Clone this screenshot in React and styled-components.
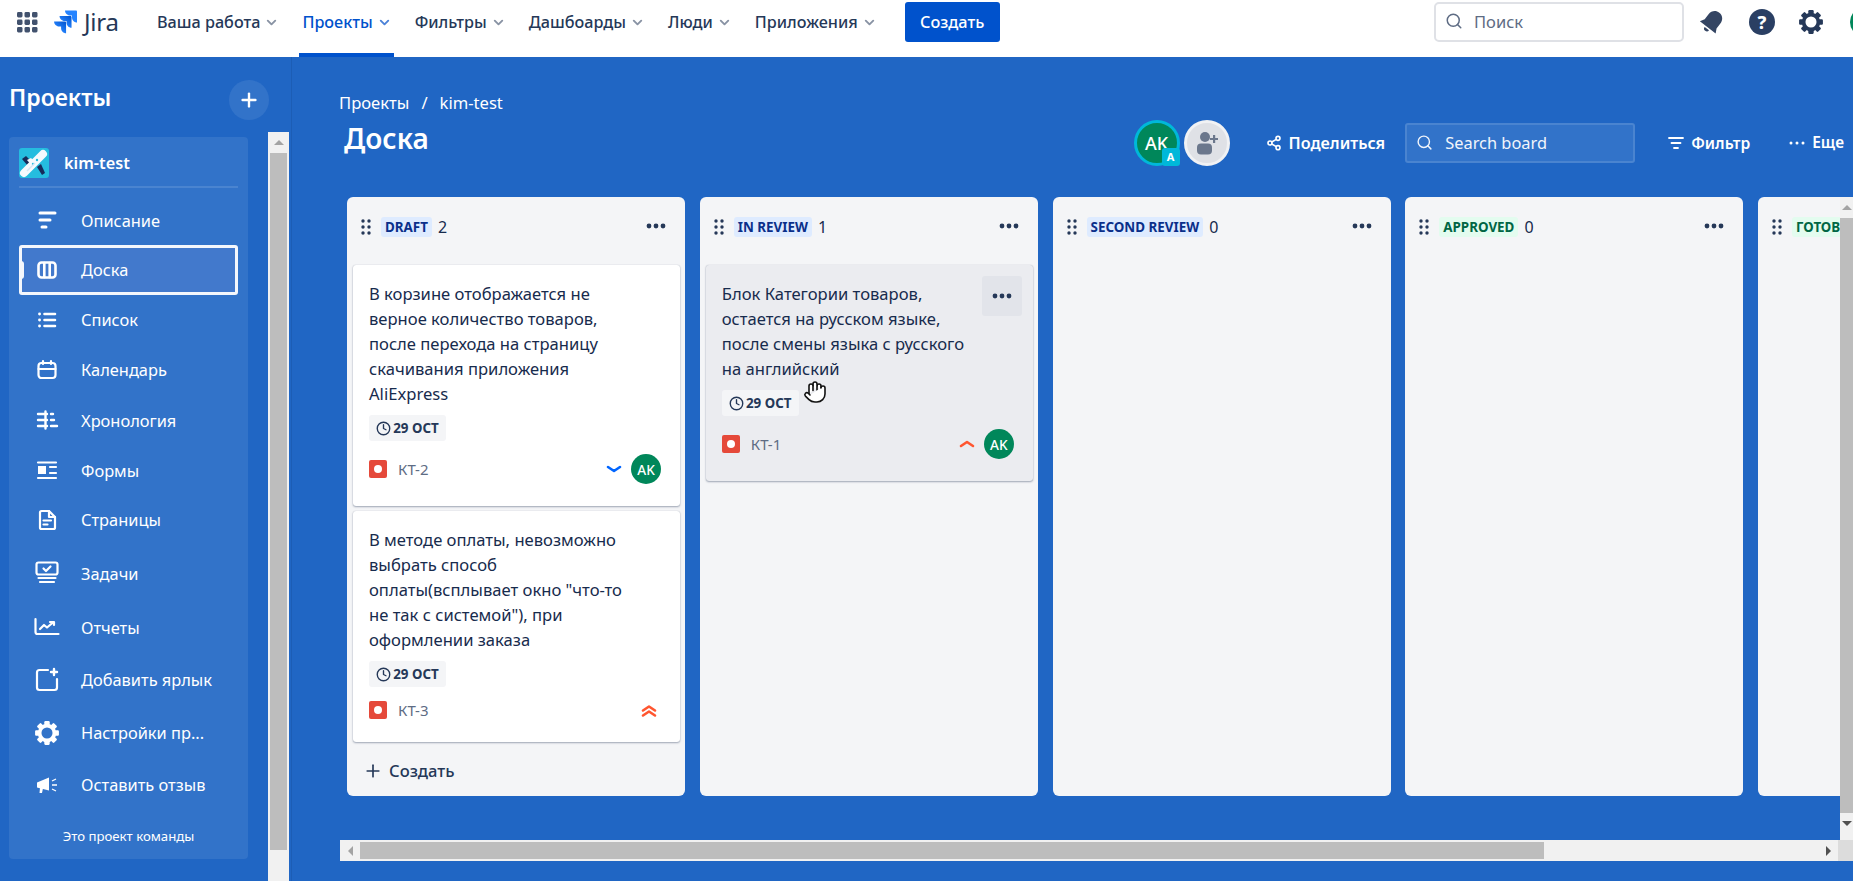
import React from "react";
import styled, { createGlobalStyle } from "styled-components";
import { Search, Share2, Clock, Plus, Hand, ChevronDown } from "lucide-react";

const Global = createGlobalStyle`
  html, body { margin: 0; padding: 0; height: 100%; overflow: hidden; }
  body { font-family: "Noto Sans", "Open Sans", sans-serif; color: #172b4d; background: #2066c4; }
  * { box-sizing: border-box; }
`;

const Page = styled.div`width: 1853px; height: 881px; display: flex; flex-direction: column; overflow: hidden;`;

/* top bar */
const TopBar = styled.header`height: 57px; flex: none; background: #fff; display: flex; align-items: flex-start; padding-left: 17px; overflow: hidden;`;
const GridWrap = styled.div`width: 21px; height: 21px; margin-top: 12px; flex: none;`;
const LogoWrap = styled.div`display: flex; align-items: center; gap: 7px; margin: 10px 0 0 16px; height: 24px; flex: none;`;
const LogoText = styled.span`font-size: 24px; font-weight: 400; color: #253858; line-height: 24px; width: 35px; letter-spacing: -0.2px;`;
const Nav = styled.nav`display: flex; gap: 18px; margin-left: 35px; flex: none;`;
const NavItem = styled.div`
  height: 57px; padding: 0 2px 9px 3px; display: flex; align-items: center; gap: 4px; font-size: 16.2px; font-weight: 500;
  color: ${p => (p.$active ? "#0052cc" : "#253858")};
  border-bottom: 4px solid ${p => (p.$active ? "#0052cc" : "transparent")};
  svg { color: ${p => (p.$active ? "#4c82d8" : "#8993a4")}; }
`;
const CreateBtn = styled.button`width: 95px; height: 40px; margin: 2px 0 0 26px; background: #0052cc; color: #fff; border: 0; border-radius: 3px; font: 500 16.3px "Noto Sans", sans-serif; flex: none;`;
const Spacer = styled.div`flex: 1;`;
const TopSearch = styled.div`width: 250px; height: 40px; margin-top: 2px; border: 2px solid #dfe1e6; border-radius: 5px; display: flex; align-items: center; padding: 0 0 2px 9px; gap: 11px; color: #5e6c84; font-size: 16.5px; flex: none;`;
const TopIcon = styled.div`width: 30px; height: 30px; margin: 7px 0 0 ${p => p.$gap}px; flex: none; display: flex; align-items: center; justify-content: center;`;
const UserDot = styled.div`width: 30px; height: 30px; margin: 7px -27px 0 24px; border-radius: 50%; background: #00875a; flex: none;`;

/* body */
const Body = styled.div`flex: 1; display: flex; min-height: 0;`;
const Sidebar = styled.aside`width: 292px; flex: none; padding-left: 9px; border-right: 1px solid #1c5db5; display: flex; flex-direction: column;`;
const SideHead = styled.div`height: 75px; display: flex; align-items: center; justify-content: space-between; padding: 10px 22px 0 0;`;
const SideTitle = styled.h2`margin: -6px 0 0; font-size: 23px; font-weight: 600; color: #fff; line-height: 30px;`;
const RoundAdd = styled.div`width: 40px; height: 40px; border-radius: 50%; background: #3273c9; color: #fff; display: flex; align-items: center; justify-content: center;`;
const SideRow = styled.div`flex: 1; display: flex; min-height: 0;`;
const ProjectCard = styled.div`width: 239px; height: 722px; margin-top: 5px; background: #3273c9; border-radius: 4px; padding: 0 10px; display: flex; flex-direction: column; flex: none;`;
const ProjectHead = styled.div`height: 51px; margin-bottom: 8px; border-bottom: 2px solid #4a84d0; display: flex; align-items: center; gap: 15px; padding-top: 3px; color: #fff; font-weight: 600; font-size: 16.3px;`;
const SideItem = styled.div`
  position: relative; height: ${p => p.$h}px; display: flex; align-items: center; color: #fff; font-size: 16.4px; border-radius: 3px; padding-bottom: 1px;
  ${p => p.$active && `
    background: #4279cc; box-shadow: inset 0 0 0 3px #f4f7fc;
    &::before { content: ""; position: absolute; left: 0; top: 16px; width: 5px; height: 18px; background: #f4f7fc; border-radius: 0 3px 3px 0; }
  `}
`;
const SideIcon = styled.span`width: 30px; margin: 0 19px 0 13px; display: flex; justify-content: center; flex: none;`;
const SideFoot = styled.div`margin-top: 15px; text-align: center; color: #fff; font-size: 13.2px; line-height: 20px;`;

const ScrollV = styled.div`width: ${p => p.$w}px; margin-left: ${p => p.$ml}px; background: #f1f1f1; display: flex; flex-direction: column; align-items: center; flex: none;`;
const ArrowBox = styled.div`height: 21px; width: 100%; display: flex; align-items: center; justify-content: center; flex: none;`;
const ThumbV = styled.div`width: ${p => p.$w}px; height: ${p => p.$h}px; background: #bdbdbd; flex: none;`;
const Tri = styled.span`
  width: 0; height: 0; border-style: solid;
  ${p => p.$dir === "up" && `border-width: 0 5px 5px 5px; border-color: transparent transparent ${p.$c} transparent;`}
  ${p => p.$dir === "down" && `border-width: 5px 5px 0 5px; border-color: ${p.$c} transparent transparent transparent;`}
  ${p => p.$dir === "left" && `border-width: 5px 5px 5px 0; border-color: transparent ${p.$c} transparent transparent;`}
  ${p => p.$dir === "right" && `border-width: 5px 0 5px 5px; border-color: transparent transparent transparent ${p.$c};`}
`;

/* main */
const Main = styled.main`flex: 1; min-width: 0; display: flex; flex-direction: column; padding-left: 47px;`;
const Crumbs = styled.div`height: 22px; margin-top: 35px; display: flex; gap: 12px; color: #fff; font-size: 16.6px; line-height: 22px;`;
const HeadRow = styled.div`height: 83px; padding: 4px 9px 30px 5px; display: flex; align-items: center;`;
const PageTitle = styled.h1`margin: -9px 0 0; font-size: 28px; font-weight: 600; color: #fff;`;
const Tools = styled.div`margin-left: auto; display: flex; align-items: center; color: #fff;`;
const AvatarBig = styled.div`position: relative; width: 46px; height: 46px; border-radius: 50%; background: #00875a; border: 3px solid #00b8d9; color: #fff; font-size: 18px; font-weight: 500; display: flex; align-items: center; justify-content: center;`;
const AvatarBadge = styled.span`position: absolute; right: -3px; bottom: -3px; width: 18px; height: 18px; border-radius: 3px; background: #00b8d9; color: #fff; font-size: 11px; font-weight: 700; display: flex; align-items: center; justify-content: center;`;
const AvatarAdd = styled.div`width: 46px; height: 46px; margin-left: 4px; border-radius: 50%; background: #dfe1e6; border: 3px solid #f1f2f4; display: flex; align-items: center; justify-content: center;`;
const ToolBtn = styled.div`display: flex; align-items: center; gap: ${p => p.$gap}px; margin-left: ${p => p.$ml}px; font-size: ${p => p.$fs}px; font-weight: 600;`;
const BoardSearch = styled.div`width: 230px; height: 40px; margin-left: 20px; background: #3273c9; border: 2px solid #4a84d0; border-radius: 3px; display: flex; align-items: center; padding-left: 9px; gap: 12px; color: #f1f5fb; font-size: 16.4px;`;

const Frame = styled.div`height: 664px; display: grid; grid-template-columns: minmax(0, 1fr) 15px; grid-template-rows: minmax(0, 1fr) 21px; margin-left: 1px;`;
const Viewport = styled.div`overflow: hidden; margin-right: -2px; min-width: 0;`;
const Columns = styled.div`display: flex; gap: 14.75px; padding-left: 7px; width: max-content;`;
const Column = styled.section`width: 338px; height: 599px; background: #f4f5f7; border-radius: 6px; display: flex; flex-direction: column; flex: none; padding: 0 5px 0 6px;`;
const ColHead = styled.div`height: 68px; flex: none; display: flex; align-items: flex-start; padding: 20px 14px 0 8px;`;
const Lozenge = styled.span`height: 20px; padding: 0 4px; margin-left: 10px; border-radius: 3px; font-size: 13.4px; font-weight: 700; line-height: 20px; background: ${p => (p.$green ? "#e3fcef" : "#deebff")}; color: ${p => (p.$green ? "#006644" : "#0a2f8a")}; white-space: nowrap;`;
const Count = styled.span`margin-left: 6px; font-size: 16px; line-height: 21px; color: #172b4d;`;
const HeadDots = styled.div`margin-left: auto; padding-top: 6px; display: flex;`;
const Cards = styled.div`display: flex; flex-direction: column; gap: 5px;`;
const Card = styled.article`position: relative; background: ${p => (p.$hover ? "#ebecf0" : "#fff")}; border-radius: 3px; padding: 16px 19px 22px 16px; box-shadow: 0 1px 2px rgba(9,30,66,.35), 0 0 1px rgba(9,30,66,.25);`;
const CardText = styled.div`font-size: 16.6px; line-height: 25px; color: #172b4d; white-space: pre-line;`;
const DateTag = styled.div`margin-top: 9px; height: 26px; width: 77px; border-radius: 3px; background: #f4f5f7; display: flex; align-items: center; justify-content: center; gap: 2px; font-size: 13.4px; font-weight: 700; color: #253858; white-space: nowrap;`;
const CardFoot = styled.div`margin-top: 13px; min-height: 20px; display: flex; align-items: center; padding-right: ${p => (p.$flush ? 2 : 0)}px;`;
const KeyText = styled.span`margin-left: 11px; font-size: 15px; color: #5e6c84;`;
const Priority = styled.span`margin-left: auto; display: flex;`;
const SmallAvatar = styled.span`width: 30px; height: 30px; margin-left: 7px; border-radius: 50%; background: #00875a; color: #fff; font-size: 13.6px; font-weight: 500; display: flex; align-items: center; justify-content: center;`;
const HoverMenu = styled.div`position: absolute; right: 11px; top: 11px; width: 40px; height: 40px; background: #e2e4ea; border-radius: 3px; display: flex; align-items: center; justify-content: center;`;
const Cursor = styled.div`position: absolute; left: 97px; top: 115px; width: 24px; height: 26px; color: #111;`;
const ColCreate = styled.div`margin-top: auto; height: 50px; padding-bottom: 1px; display: flex; align-items: center; gap: 6px; padding-left: 10px; font-size: 16.6px; font-weight: 500; color: #253858;`;

const ScrollH = styled.div`display: flex; align-items: center; background: #f1f1f1;`;
const ArrowSide = styled.div`width: 20px; height: 100%; display: flex; align-items: center; justify-content: center; flex: none; margin-left: ${p => (p.$end ? "auto" : "0")};`;
const ThumbH = styled.div`width: 1184px; height: 17px; background: #bdbdbd; flex: none;`;
const Corner = styled.div`background: #dcdcdc;`;

/* drawings */
const Dots3 = ({ c = "#253858" }) => (
  <svg width="20" height="6" viewBox="0 0 20 6"><circle cx="3" cy="3" r="2.4" fill={c} /><circle cx="10" cy="3" r="2.4" fill={c} /><circle cx="17" cy="3" r="2.4" fill={c} /></svg>
);
const DotsSmall = () => (
  <svg width="16" height="4" viewBox="0 0 16 4"><circle cx="2" cy="2" r="1.5" fill="#fff" /><circle cx="8" cy="2" r="1.5" fill="#fff" /><circle cx="14" cy="2" r="1.5" fill="#fff" /></svg>
);
const Grip = () => (
  <svg width="10" height="16" viewBox="0 0 10 16" style={{ marginTop: 2, flex: "none" }}>
    {[2, 8, 14].flatMap(y => [2, 8].map(x => <circle key={x + "-" + y} cx={x} cy={y} r="1.7" fill="#253858" />))}
  </svg>
);
const GridIcon = () => (
  <svg width="21" height="21" viewBox="0 0 21 21">
    {[0, 7.5, 15].flatMap(y => [0, 7.5, 15].map(x => <rect key={x + "-" + y} x={x} y={y} width="5.5" height="5.5" rx="1.4" fill="#42526e" />))}
  </svg>
);
const JiraLogo = () => (
  <svg width="23" height="24" viewBox="0 2 24 24">
    <defs>
      <linearGradient id="jg" x1="1" y1="0" x2="0.4" y2="0.7"><stop offset="0" stopColor="#0052cc" /><stop offset="1" stopColor="#2684ff" /></linearGradient>
    </defs>
    <path d="M22.9 2H11.5c0 2.8 2.3 5.2 5.2 5.2h2.1v2c0 2.9 2.3 5.2 5.2 5.2V3.1C24 2.5 23.5 2 22.9 2z" fill="#2684ff" />
    <path d="M17.2 7.7H5.8c0 2.8 2.3 5.2 5.2 5.2h2.1v2c0 2.9 2.3 5.2 5.2 5.2V8.8c0-.6-.5-1.1-1.1-1.1z" fill="url(#jg)" />
    <path d="M11.5 13.4H.1c0 2.8 2.3 5.2 5.2 5.2h2.1v2c0 2.9 2.3 5.2 5.2 5.2V14.5c0-.6-.5-1.1-1.1-1.1z" fill="url(#jg)" />
  </svg>
);
const ProjectIcon = () => (
  <svg width="30" height="30" viewBox="0 0 30 30" style={{ flex: "none" }}>
    <rect width="30" height="30" rx="3" fill="#25bcdf" />
    <path d="M3 11l4-3 6 6-4 4z" fill="#172b5a" />
    <path d="M18 19l4-3 4 9-3 2z" fill="#172b5a" />
    <path d="M5 25L24 6" stroke="#f5f9fd" strokeWidth="8" strokeLinecap="round" />
    <path d="M8 12l4-2 5 5-4 3z" fill="#f5f9fd" />
    <circle cx="18" cy="12" r="1.2" fill="#25bcdf" /><circle cx="14" cy="16" r="1.2" fill="#25bcdf" />
    <path d="M8 23l8-8" stroke="#d3e6f5" strokeWidth="1.5" />
  </svg>
);
const Gear = ({ size = 26, c = "#253858" }) => (
  <svg width={size} height={size} viewBox="0 0 24 24">
    {[0, 45, 90, 135, 180, 225, 270, 315].map(a => <rect key={a} x="9.5" y="1" width="5" height="5" rx="1" fill={c} transform={`rotate(${a} 12 12)`} />)}
    <circle cx="12" cy="12" r="6.8" fill="none" stroke={c} strokeWidth="3.4" />
  </svg>
);
const Bell = () => (
  <svg width="30" height="30" viewBox="0 0 24 24">
    <g transform="rotate(38 12 12)" fill="#344563">
      <path d="M12 2.5c-3.6 0-6 2.8-6 6.3v5L4 17.5h16l-2-3.7v-5c0-3.5-2.4-6.3-6-6.3z" />
      <path d="M9.8 18.7h4.4a2.2 2.2 0 0 1-4.4 0z" />
    </g>
  </svg>
);
const Help = () => (
  <svg width="26" height="26" viewBox="0 0 26 26">
    <circle cx="13" cy="13" r="13" fill="#2a3f63" />
    <text x="13" y="19.5" textAnchor="middle" fontSize="18" fontWeight="800" fill="#fff" fontFamily="Noto Sans, sans-serif">?</text>
  </svg>
);
const UserAdd = () => (
  <svg width="26" height="26" viewBox="0 0 26 26" fill="#6b778c">
    <circle cx="11" cy="7" r="5" />
    <rect x="3" y="13.5" width="15" height="11" rx="4" />
    <path d="M19 5h2.2v3H24v2h-2.8v3H19v-3h-3V8h3z" />
  </svg>
);
const FilterIcon = () => (
  <svg width="16" height="14" viewBox="0 0 16 14" fill="none" stroke="#fff" strokeWidth="1.8" strokeLinecap="round">
    <path d="M1 2h14M3.5 7h9M6 12h4" />
  </svg>
);
const Chevron = ({ c, up, double }) => (
  <svg width="20" height="16" viewBox="0 0 20 16" fill="none" stroke={c} strokeWidth="2.6" strokeLinecap="round" strokeLinejoin="round">
    {up ? <path d={double ? "M4 8.5l6-4 6 4M4 13.5l6-4 6 4" : "M4 10l6-4 6 4"} /> : <path d="M4 6l6 4 6-4" />}
  </svg>
);
const Bug = () => (
  <svg width="18" height="18" viewBox="0 0 18 18" style={{ flex: "none" }}>
    <rect width="18" height="18" rx="2" fill="#e5493a" /><circle cx="9" cy="9" r="4" fill="#fff" />
  </svg>
);
const W = ({ children, w = 24, h = 24 }) => (
  <svg width={w} height={h} viewBox={`0 0 ${w} ${h}`} fill="none" stroke="#fff" strokeWidth="2.2" strokeLinecap="round" strokeLinejoin="round">{children}</svg>
);
const sideIcons = {
  desc: <W><path d="M5 5h15M5 12h10M7 19h4" strokeWidth="3" /></W>,
  board: <W><rect x="3.5" y="4.5" width="17" height="15" rx="3" strokeWidth="2.6" /><path d="M9.3 5v14M14.7 5v14" strokeWidth="2.6" /></W>,
  list: <W><path d="M9.5 6H20M9.5 12H20M9.5 18H20" strokeWidth="2.6" /><path d="M4.5 6h.1M4.5 12h.1M4.5 18h.1" strokeWidth="2.8" /></W>,
  cal: <W><rect x="3.5" y="5" width="17" height="15" rx="3" /><path d="M3.5 11h17M8 3v3M16 3v3" /></W>,
  time: <W><path d="M3 6h9M3 12h9M3 18h9M10.5 3.5v17M16 6h2M16 12h3M16 18h6" strokeWidth="2.4" /></W>,
  forms: <W><path d="M3 4.5h18M3 20h18M15 9h6M15 15h6" /><rect x="3" y="8" width="8" height="8" fill="#fff" stroke="none" /></W>,
  pages: <W><path d="M5 4.5A1.5 1.5 0 0 1 6.5 3H14l6 6v10.5a1.5 1.5 0 0 1-1.5 1.5h-12A1.5 1.5 0 0 1 5 19.5z" /><path d="M14 3v6h6" /><path d="M8.5 12.5H16M8.5 16.5h4" /></W>,
  tasks: <W w={26} h={26}><rect x="2.5" y="2.5" width="21" height="12" rx="2" /><path d="M9.5 8.5l2.5 2.5 4.5-4.5M4.5 18h17M6 22h14" /></W>,
  reports: <W w={30} h={24}><path d="M3.5 4v13a2 2 0 0 0 2 2h21" /><path d="M8 14l4-4 3 2.5 6-5M18 7h4v3" /></W>,
  add: <W w={28} h={28}><path d="M15 4H6.5A2.5 2.5 0 0 0 4 6.5v15A2.5 2.5 0 0 0 6.5 24h15a2.5 2.5 0 0 0 2.5-2.5V13" /><path d="M21 3v6M18 6h6" strokeWidth="2.4" /></W>,
  gear: <Gear size={26} c="#fff" />,
  feedback: (
    <svg width="24" height="24" viewBox="0 0 24 24" fill="#fff">
      <path d="M2 9.5l12-5v13l-12-3zM5 14.5l3 .8-1 4.7H4.500z" />
      <path d="M17 8l4-2M17 12h5M17 16l4 2" stroke="#fff" strokeWidth="1.3" fill="none" />
    </svg>
  ),
};

const sideItems = [
  ["desc", "Описание", 49],
  ["board", "Доска", 50, true],
  ["list", "Список", 50],
  ["cal", "Календарь", 50],
  ["time", "Хронология", 51],
  ["forms", "Формы", 49],
  ["pages", "Страницы", 50],
  ["tasks", "Задачи", 57],
  ["reports", "Отчеты", 51],
  ["add", "Добавить ярлык", 54],
  ["gear", "Настройки пр...", 52],
  ["feedback", "Оставить отзыв", 52],
];

const navItems = ["Ваша работа", "Проекты", "Фильтры", "Дашбоарды", "Люди", "Приложения"];

const columns = [
  {
    name: "DRAFT", count: 2, create: true,
    cards: [
      { text: "В корзине отображается не\nверное количество товаров,\nпосле перехода на страницу\nскачивания приложения\nAliExpress", key: "КТ-2", pr: <Chevron c="#0065ff" />, avatar: true },
      { text: "В методе оплаты, невозможно\nвыбрать способ\nоплаты(всплывает окно \"что-то\nне так с системой\"), при\nоформлении заказа", key: "КТ-3", pr: <Chevron c="#ff5630" up double /> },
    ],
  },
  {
    name: "IN REVIEW", count: 1,
    cards: [
      { text: "Блок Категории товаров,\nостается на русском языке,\nпосле смены языка с русского\nна английский", key: "КТ-1", pr: <Chevron c="#ff5630" up />, avatar: true, hover: true },
    ],
  },
  { name: "SECOND REVIEW", count: 0, cards: [] },
  { name: "APPROVED", count: 0, green: true, cards: [] },
  { name: "ГОТОВО", count: 0, green: true, cards: [] },
];

export default function App() {
  return (
    <Page>
      <Global />
      <TopBar>
        <GridWrap><GridIcon /></GridWrap>
        <LogoWrap><JiraLogo /><LogoText>Jira</LogoText></LogoWrap>
        <Nav>
          {navItems.map(n => (
            <NavItem key={n} $active={n === "Проекты"}>{n}<ChevronDown size={15} strokeWidth={3} /></NavItem>
          ))}
        </Nav>
        <CreateBtn>Создать</CreateBtn>
        <Spacer />
        <TopSearch><Search size={18} strokeWidth={2} />Поиск</TopSearch>
        <TopIcon $gap={13}><Bell /></TopIcon>
        <TopIcon $gap={20}><Help /></TopIcon>
        <TopIcon $gap={19}><Gear /></TopIcon>
        <UserDot />
      </TopBar>
      <Body>
        <Sidebar>
          <SideHead>
            <SideTitle>Проекты</SideTitle>
            <RoundAdd><Plus size={22} strokeWidth={2.6} /></RoundAdd>
          </SideHead>
          <SideRow>
            <ProjectCard>
              <ProjectHead><ProjectIcon />kim-test</ProjectHead>
              {sideItems.map(([ic, label, h, active]) => (
                <SideItem key={label} $h={h} $active={active}>
                  <SideIcon>{sideIcons[ic]}</SideIcon>{label}
                </SideItem>
              ))}
              <SideFoot>Это проект команды</SideFoot>
            </ProjectCard>
            <ScrollV $w={21} $ml={20}>
              <ArrowBox><Tri $dir="up" $c="#a3a3a3" /></ArrowBox>
              <ThumbV $w={17} $h={697} />
            </ScrollV>
          </SideRow>
        </Sidebar>
        <Main>
          <Crumbs><span>Проекты</span><span>/</span><span>kim-test</span></Crumbs>
          <HeadRow>
            <PageTitle>Доска</PageTitle>
            <Tools>
              <AvatarBig>AK<AvatarBadge>A</AvatarBadge></AvatarBig>
              <AvatarAdd><UserAdd /></AvatarAdd>
              <ToolBtn $gap={7} $ml={36} $fs={16.2}><Share2 size={16} strokeWidth={2.4} />Поделиться</ToolBtn>
              <BoardSearch><Search size={17} strokeWidth={2} />Search board</BoardSearch>
              <ToolBtn $gap={7} $ml={33} $fs={15.7}><FilterIcon />Фильтр</ToolBtn>
              <ToolBtn $gap={7} $ml={39} $fs={15.4}><DotsSmall />Еще</ToolBtn>
            </Tools>
          </HeadRow>
          <Frame>
            <Viewport>
              <Columns>
                {columns.map(col => (
                  <Column key={col.name}>
                    <ColHead>
                      <Grip />
                      <Lozenge $green={col.green}>{col.name}</Lozenge>
                      <Count>{col.count}</Count>
                      <HeadDots><Dots3 /></HeadDots>
                    </ColHead>
                    <Cards>
                      {col.cards.map(c => (
                        <Card key={c.key} $hover={c.hover}>
                          <CardText>{c.text}</CardText>
                          <DateTag><Clock size={15} strokeWidth={2.2} />29 ОСТ</DateTag>
                          <CardFoot $flush={!c.avatar}>
                            <Bug /><KeyText>{c.key}</KeyText>
                            <Priority>{c.pr}</Priority>
                            {c.avatar && <SmallAvatar>AK</SmallAvatar>}
                          </CardFoot>
                          {c.hover && <HoverMenu><Dots3 /></HoverMenu>}
                          {c.hover && <Cursor><Hand size={24} fill="#fff" strokeWidth={1.6} /></Cursor>}
                        </Card>
                      ))}
                    </Cards>
                    {col.create && <ColCreate><Plus size={20} strokeWidth={2} />Создать</ColCreate>}
                  </Column>
                ))}
              </Columns>
            </Viewport>
            <ScrollV $w={13} $ml={2}>
              <ArrowBox><Tri $dir="up" $c="#a3a3a3" /></ArrowBox>
              <ThumbV $w={13} $h={595} />
              <ArrowBox><Tri $dir="down" $c="#505050" /></ArrowBox>
            </ScrollV>
            <ScrollH>
              <ArrowSide><Tri $dir="left" $c="#a3a3a3" /></ArrowSide>
              <ThumbH />
              <ArrowSide $end><Tri $dir="right" $c="#505050" /></ArrowSide>
            </ScrollH>
            <Corner />
          </Frame>
        </Main>
      </Body>
    </Page>
  );
}
